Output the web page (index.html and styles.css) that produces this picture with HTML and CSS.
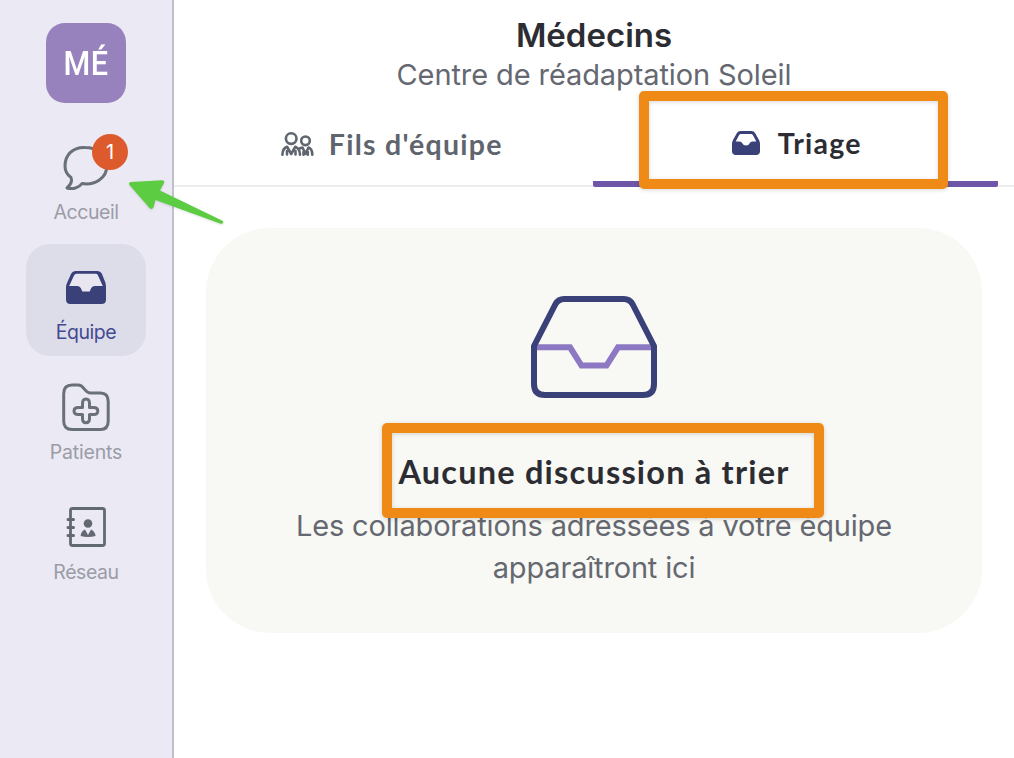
FILE: index.html
```html
<!DOCTYPE html>
<html lang="fr">
<head>
<meta charset="utf-8">
<title>Médecins – Triage</title>
<link rel="stylesheet" href="styles.css">
</head>
<body>
<div class="app">
  <nav class="sidebar">
    <div class="avatar"><span class="avatar-text">MÉ</span></div>
    <a class="nav-item">
      <svg class="nav-icon" viewBox="0 0 64 56" fill="none" stroke="#6a7079" stroke-width="3" stroke-linejoin="round" stroke-linecap="round"><path d="M31 8.500C18 8 11 16.500 11 27C11 32 13.500 36 17 38.500C18.500 42 17 45.500 13 49C18.500 50.500 25 49 28 44.500C40 46.500 53 40 53 26C53 16 43 8.500 31 8.500Z"/></svg>
      <span class="nav-label">Accueil</span>
      <span class="badge">1</span>
    </a>
    <a class="nav-item active">
      <svg class="nav-icon" viewBox="0 0 64 56"><path d="M20 14H45L50 28H14Z" fill="#e8e6f1"/><path d="M27 27H37V33H27Z" fill="#e8e6f1"/><path fill="#3a4078" fill-rule="evenodd" d="M22 12H43Q46.500 12 48 15L51.500 24Q52 26.500 52 28V40.500Q52 45 47.500 45H16.500Q12 45 12 40.500V28Q12 26 13 24L17 15Q18.500 12 22 12ZM22.500 14.800Q20.800 14.800 20 16.500L15.200 27H23.500Q26 27 27 29.500L28.300 32.500H35.700L37 29.500Q38 27 40.500 27H48.800L44 16.500Q43.500 14.800 42 14.800Z"/></svg>
      <span class="nav-label">Équipe</span>
    </a>
    <a class="nav-item">
      <svg class="nav-icon" viewBox="0 0 64 56" fill="none" stroke="#6a7079" stroke-width="3" stroke-linejoin="round"><path d="M18 6H24.500C30 6 30.500 14 36.500 14H46.500Q54.200 14 54.200 22.500V42Q54.200 50.500 46.500 50.500H18Q9.700 50.500 9.700 42V14.500Q9.700 6 18 6Z"/><path d="M28.500 24.500Q28.500 20 32 20T35.500 24.500V28.500H39.500Q43.800 28.500 43.800 32T39.500 35.500H35.500V39.500Q35.500 43.800 32 43.800T28.500 39.500V35.500H24.500Q20 35.500 20 32T24.500 28.500H28.500Z"/></svg>
      <span class="nav-label patients">Patients</span>
    </a>
    <a class="nav-item">
      <svg class="nav-icon" viewBox="0 0 64 56" fill="none" stroke="#636973" stroke-width="2.800" stroke-linecap="round"><rect x="16.500" y="9.500" width="34" height="37" rx="2"/><path d="M14 20.500H19.500M14 28.500H19.500M14 36.500H19.500" stroke-width="3"/><circle cx="34" cy="24.500" r="4.300" fill="#636973" stroke="none"/><path d="M31 30.500Q27 32 26.600 37Q34 39 41.600 37Q41 32 37 30.500L34 36Z" fill="#636973" stroke="none"/></svg>
      <span class="nav-label">Réseau</span>
    </a>
  </nav>
  <main class="main">
    <header class="header">
      <h1 class="title">Médecins</h1>
      <p class="subtitle">Centre de réadaptation Soleil</p>
    </header>
    <div class="tabs">
      <div class="tab">
        <svg class="people" viewBox="0 0 34 26" fill="none" stroke="#60666f" stroke-width="2.600" stroke-linejoin="round" stroke-linecap="round"><circle cx="11.200" cy="7.600" r="5.300"/><circle cx="25.500" cy="9.800" r="4.300"/><path d="M2.400 23.800C2.400 19.500 4 17 7.200 15.800L11.200 23L15.200 15.800C18.300 17 20 19.500 20 23.800M7 20V23.500M15.500 20V23.500M20 17.200L22.500 16.500L25.500 22.800L28.500 16.500C31 17.500 32.300 20 32.300 23.800M23.500 21V23.800M27.800 21V23.800"/></svg>
        <span class="tab-label">Fils d'équipe</span>
      </div>
      <div class="tab selected">
        <svg class="tray" viewBox="0 0 28 24"><path fill="#3a4078" fill-rule="evenodd" d="M8.500 0H19.500Q22 0 23.200 2.200L27 9Q28 11 28 13V20Q28 24 24 24H4Q0 24 0 20V13Q0 11 1 9L4.800 2.200Q6 0 8.500 0ZM9 3Q7.700 3 7 4.200L3.700 10.500H7.500Q9.500 10.500 10.500 12.500Q11.200 14.500 14 14.500T17.500 12.500Q18.500 10.500 20.500 10.500H24.300L21 4.200Q20.300 3 19 3Z"/></svg>
        <span class="tab-label">Triage</span>
      </div>
    </div>
    <section class="empty">
      <svg class="empty-icon" viewBox="0 0 126 102" fill="none" stroke-width="6"><path stroke="#8d79c3" d="M5 51.300H39L50.500 69.500H75.500L87 51.300H121"/><path stroke="#3a4078" stroke-linejoin="round" d="M33 3H93Q98.500 3 101.500 8L123 50V88Q123 99 112 99H14Q3 99 3 88V50L24.500 8Q27.500 3 33 3Z"/></svg>
      <h2 class="empty-title">Aucune discussion à trier</h2>
      <p class="empty-text">Les collaborations adressées à votre équipe<br>apparaîtront ici</p>
    </section>
  </main>
  <div class="highlight highlight-tab"></div>
  <div class="highlight highlight-title"></div>
  <svg class="arrow" viewBox="0 0 110 60"><path fill="#5ccc42" d="M11 2L42 0.200Q45 0.200 44 3L40 10.500L102 40.500Q104 42 103 43Q102.500 44.300 100 43.500L35.500 20L33.500 27.500Q32 30 29.500 28L9.500 5Q8 2.500 11 2Z"/></svg>
</div>
</body>
</html>
```
FILE: styles.css
```css
* { box-sizing: border-box; }
body { margin: 0; background: #fff; font-family: Inter, "Liberation Sans", sans-serif; }
h1, h2, p { margin: 0; font-weight: 400; }
svg { display: block; flex: none; }
.app { position: relative; display: flex; width: 1014px; height: 758px; overflow: hidden; }

.sidebar { display: flex; flex-direction: column; align-items: center; gap: 8px; width: 174px; padding-top: 23px; background: #ebe9f4; border-right: 2px solid #bfc0ce; }
.avatar { display: flex; align-items: center; justify-content: center; width: 80px; height: 80px; margin-bottom: 12.500px; border-radius: 19px; background: #9882bd; color: #fff; font-family: Roboto, sans-serif; font-size: 34px; font-weight: 500; }
.avatar-text { transform: scaleX(.9); letter-spacing: .5px; }
.nav-item { position: relative; display: flex; flex-direction: column; align-items: center; width: 120px; height: 112px; padding-top: 15px; border-radius: 24px; color: #9a9ca6; }
.nav-item.active { background: #dddde9; color: #444a91; }
.nav-icon { width: 64px; height: 56px; }
.nav-label { font-size: 19.500px; line-height: 24px; margin-top: 5.500px; letter-spacing: -.45px; white-space: nowrap; }
.nav-label.patients { letter-spacing: -.2px; }
.badge { position: absolute; left: 66px; top: 10.500px; width: 36px; height: 36px; border-radius: 50%; background: #dd5a2d; color: #fff; font-size: 20px; line-height: 37px; text-align: center; }

.main { flex: 1; display: flex; flex-direction: column; background: #fff; }
.header { height: 103px; padding-top: 15px; text-align: center; }
.title { font-size: 33px; line-height: 40px; font-weight: 600; color: #2c2d33; }
.subtitle { padding-top: 1px; font-size: 29px; line-height: 38px; letter-spacing: -.1px; color: #656870; white-space: nowrap; }
.tabs { display: flex; height: 84px; padding: 0 16px; border-bottom: 2px solid #ececee; }
.tab { display: flex; flex: 1; align-items: center; justify-content: center; gap: 15px; padding-bottom: 1px; font-family: Lato, sans-serif; font-size: 28.500px; font-weight: 700; letter-spacing: 1.25px; color: #60646e; white-space: nowrap; }
.tab.selected { gap: 18px; height: 84px; padding: 2px 0 0 3px; border-bottom: 6px solid #6e57a8; border-radius: 2px; color: #2c2d33; }
.people { width: 34px; height: 26px; }
.tray { width: 28px; height: 24px; }

.empty { display: flex; flex-direction: column; align-items: center; width: 776px; height: 405px; margin: 41px auto 0; padding-top: 68px; border-radius: 64px; background: #f8f8f4; }
.empty-icon { width: 126px; height: 102px; }
.empty-title { margin-top: 53px; font-family: Lato, sans-serif; font-size: 32.500px; font-weight: 700; line-height: 42px; letter-spacing: 1.2px; color: #2c2d33; white-space: nowrap; }
.empty-text { margin-top: 12px; font-size: 29px; line-height: 42px; letter-spacing: -.17px; text-align: center; color: #656870; white-space: nowrap; }

/* Annotations drawn over the interface */
.highlight { position: absolute; border: 10px solid #f08a17; border-radius: 5px; box-shadow: 0 1px 4px rgba(0, 0, 0, .16), inset 0 1px 4px rgba(0, 0, 0, .16); }
.highlight-tab { left: 639px; top: 91px; width: 309px; height: 98px; }
.highlight-title { left: 382px; top: 423px; width: 442px; height: 95px; }
.arrow { position: absolute; left: 120px; top: 180px; width: 110px; height: 60px; filter: drop-shadow(0 1px 1px rgba(0, 0, 0, .12)); }
```
